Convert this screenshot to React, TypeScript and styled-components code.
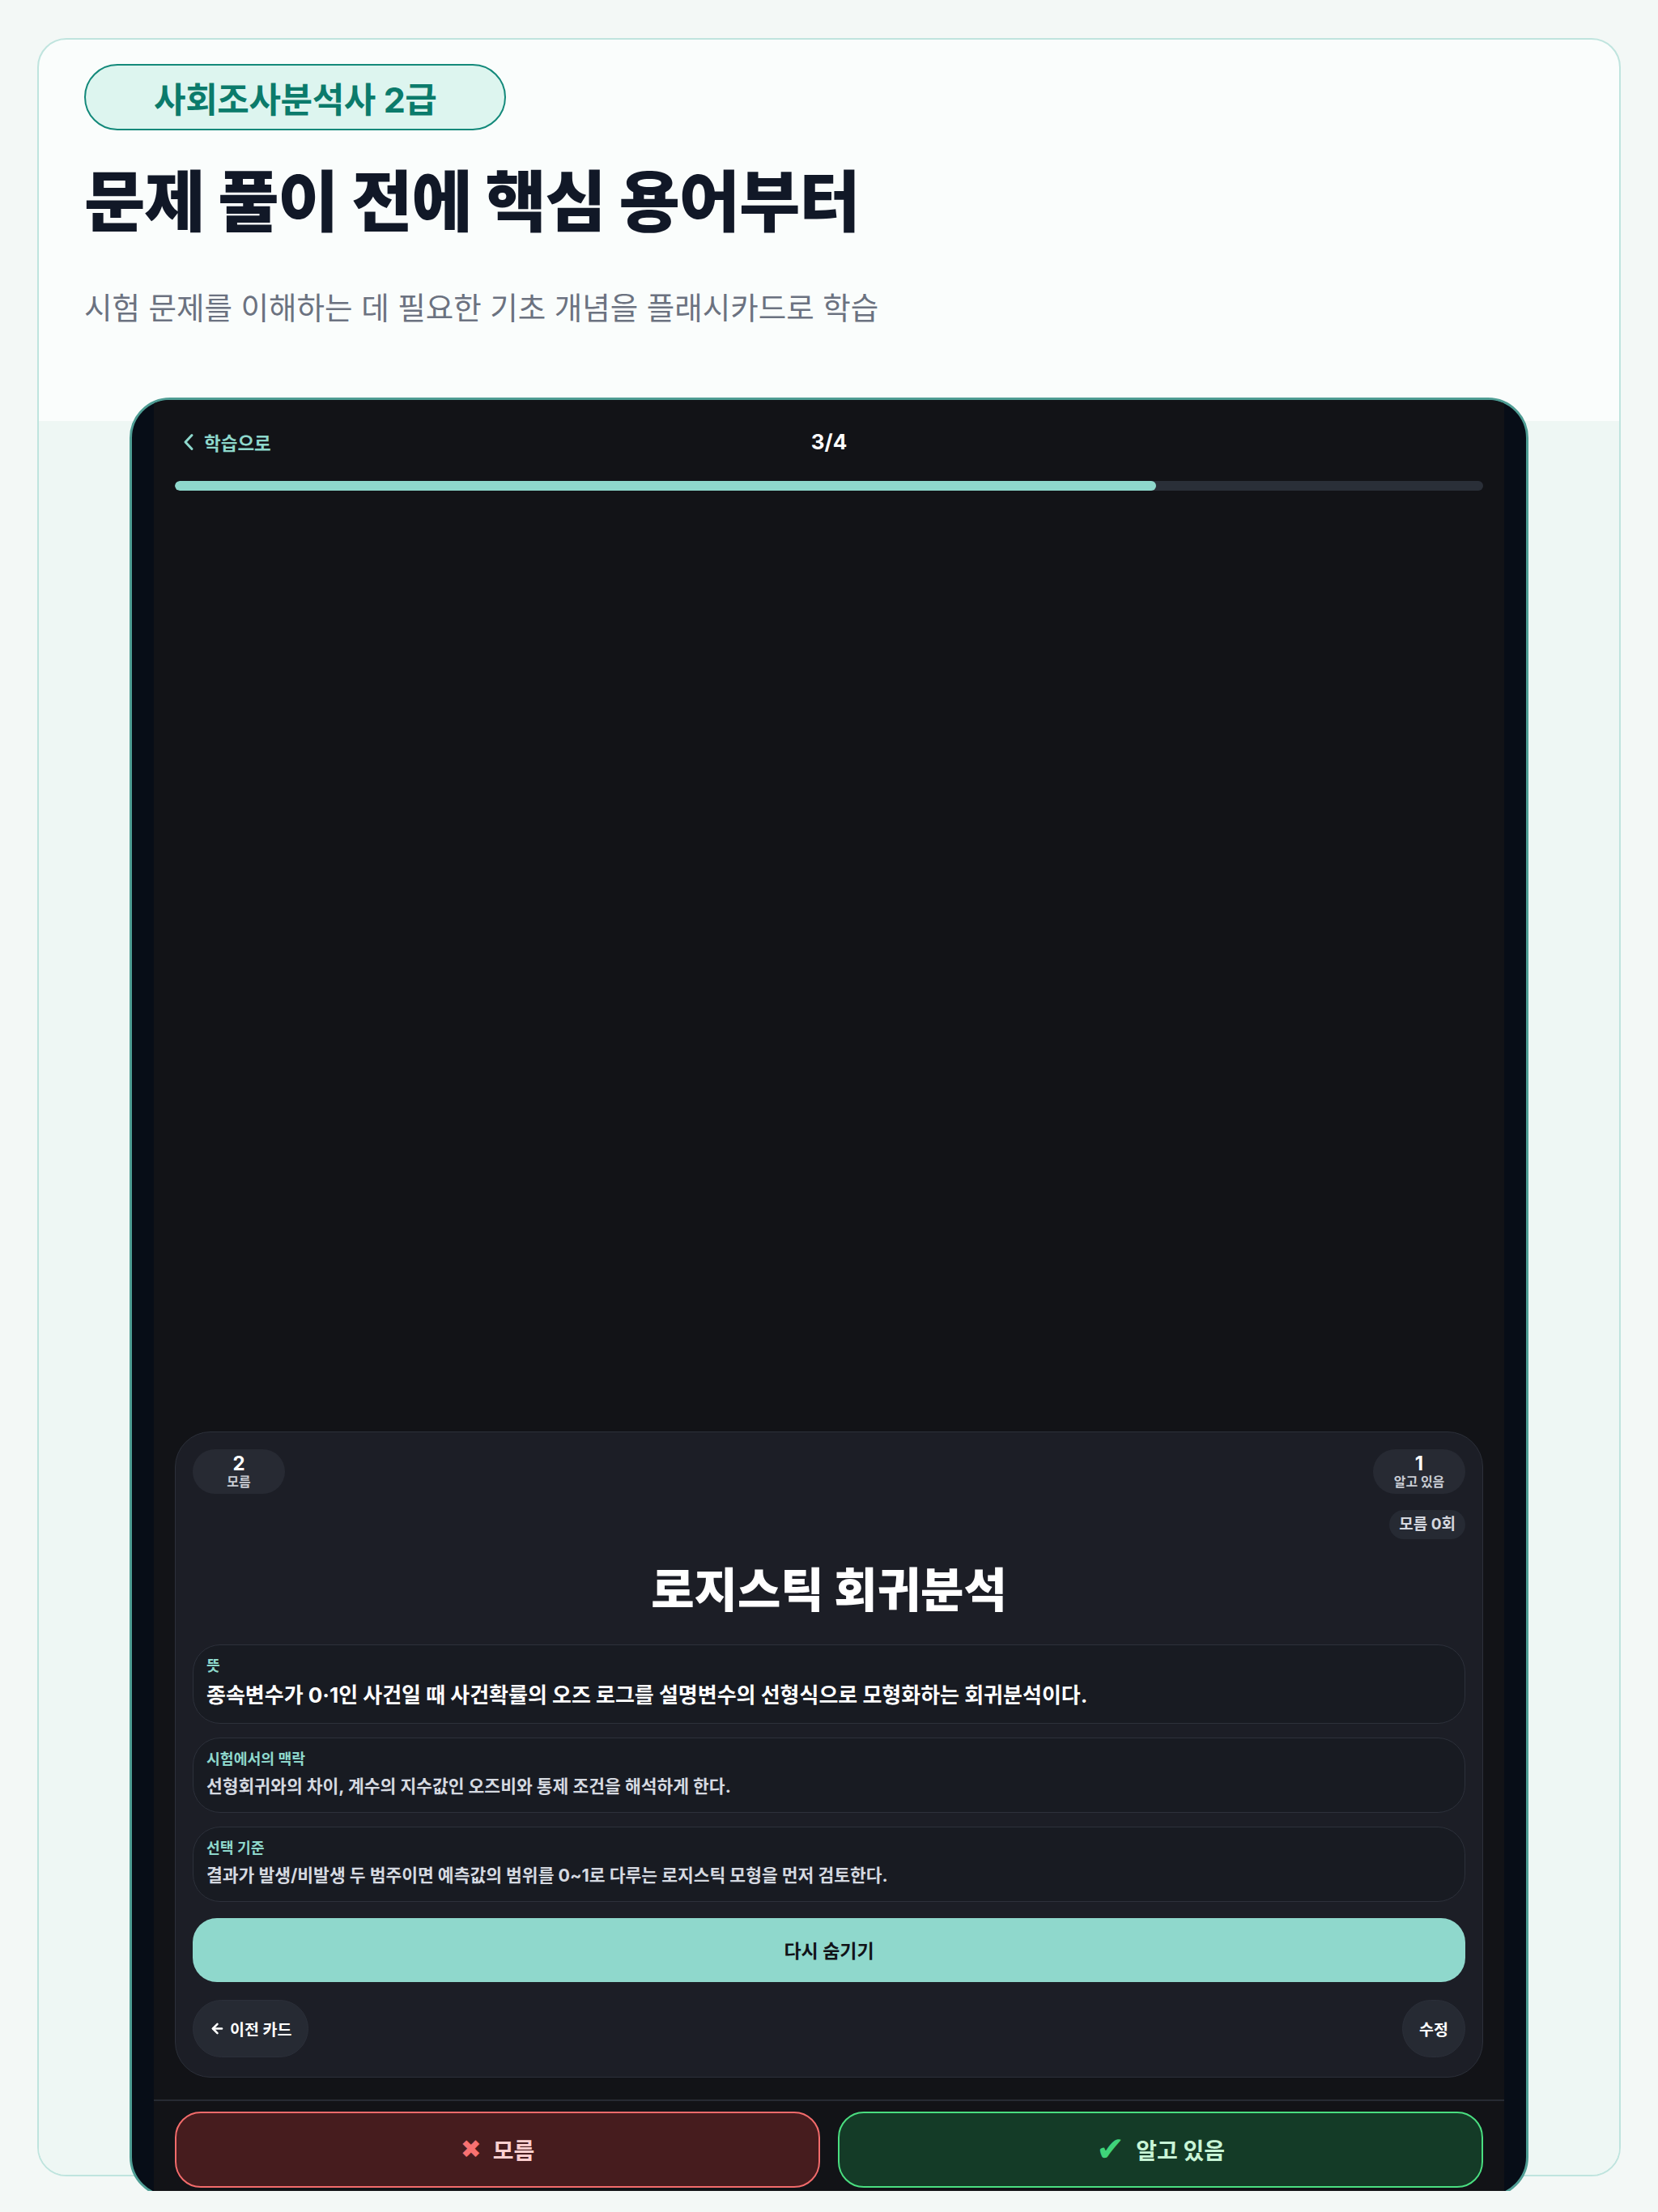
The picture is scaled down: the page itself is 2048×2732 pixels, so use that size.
import styled, { createGlobalStyle } from 'styled-components'
import { ArrowLeft } from 'lucide-react'

const GlobalStyle = createGlobalStyle`
  * {
    box-sizing: border-box;
  }
  body {
    margin: 0;
    background: #f3f8f6;
    font-family: Inter, "Noto Sans CJK KR", sans-serif;
  }
`

const Page = styled.div`
  padding: 47px 46px 18px;
`

const Shell = styled.section`
  border: 2px solid #bfe4de;
  border-radius: 36px;
  background: #fafdfc;
`

const Hero = styled.header`
  padding: 30px 56px 112px;
`

const Badge = styled.div`
  display: inline-flex;
  align-items: center;
  justify-content: center;
  height: 82px;
  padding: 0 84px;
  border: 2px solid #13897a;
  border-radius: 999px;
  background: #ddf5ef;
  color: #0b7b6b;
  font-size: 43px;
  font-weight: 700;
  letter-spacing: -0.01em;
`

const Title = styled.h1`
  margin: 40px 0 0;
  font-size: 82px;
  line-height: 1.2;
  font-weight: 800;
  color: #111827;
  letter-spacing: -0.015em;
`

const Lead = styled.p`
  margin: 56px 0 0;
  font-size: 37.5px;
  line-height: 1.4;
  font-weight: 400;
  color: #6b7280;
`

const Preview = styled.div`
  display: flex;
  justify-content: center;
  background: #eef7f4;
  border-radius: 0 0 34px 34px;
`

const Device = styled.div`
  display: flex;
  width: 1728px;
  height: 2223px;
  margin: -29px 0 -28px;
  padding: 0 27px;
  border: 3px solid #4f9d94;
  border-radius: 50px;
  background: #070d17;
  overflow: hidden;
`

const Screen = styled.div`
  flex: 1;
  display: flex;
  flex-direction: column;
  background: #121317;
`

const TopBar = styled.div`
  display: grid;
  grid-template-columns: 1fr auto 1fr;
  align-items: center;
  height: 32px;
  margin: 36px 26px 0;
`

const BackLink = styled.div`
  display: flex;
  align-items: center;
  gap: 12px;
  color: #8ed8cc;
  font-size: 22.5px;
  font-weight: 700;
  padding-left: 10px;
`

const Counter = styled.div`
  color: #ffffff;
  font-size: 26px;
  font-weight: 700;
`

const Track = styled.div`
  height: 12px;
  margin: 32px 26px 0;
  border-radius: 6px;
  background: #2a2f38;
  overflow: hidden;
`

const Fill = styled.div`
  height: 100%;
  border-radius: 6px;
  background: #8ed8cc;
`

const Spacer = styled.div`
  flex: 1;
`

const Card = styled.div`
  margin: 0 26px;
  padding: 21px 21px 24px;
  border: 1.5px solid #2c303a;
  border-radius: 44px;
  background: #1c1e26;
`

const StatRow = styled.div`
  display: flex;
  justify-content: space-between;
`

const Stat = styled.div`
  width: 114px;
  height: 55px;
  padding-top: 6px;
  border-radius: 28px;
  background: #272a33;
  text-align: center;
`

const StatValue = styled.div`
  color: #ffffff;
  font-size: 24px;
  font-weight: 700;
  line-height: 24px;
`

const StatLabel = styled.div`
  color: #c9ccd3;
  font-size: 16px;
  font-weight: 700;
  line-height: 20px;
`

const MissRow = styled.div`
  display: flex;
  justify-content: flex-end;
  margin-top: 20px;
`

const MissPill = styled.div`
  height: 36px;
  padding: 0 12px;
  border-radius: 18px;
  background: #262a33;
  color: #d4d7de;
  font-size: 19px;
  font-weight: 700;
  line-height: 36px;
`

const Term = styled.h2`
  margin: 28px 0 0;
  color: #ffffff;
  font-size: 58px;
  font-weight: 800;
  line-height: 70px;
  text-align: center;
`

const Sections = styled.div`
  display: flex;
  flex-direction: column;
  gap: 17px;
  margin-top: 32px;
`

const Section = styled.div`
  padding: 14px 16px 17px;
  border: 1.5px solid #2d313b;
  border-radius: 34px;
  background: #181b22;
`

const SectionLabel = styled.div`
  color: #8ed8cc;
  font-size: 18.3px;
  font-weight: 700;
  line-height: 22px;
  margin-bottom: 8px;
`

const SectionText = styled.div<{ $lead?: boolean }>`
  color: ${(p) => (p.$lead ? '#ffffff' : '#d5d9e0')};
  font-size: ${(p) => (p.$lead ? '26px' : '21.5px')};
  font-weight: 700;
  line-height: ${(p) => (p.$lead ? '35px' : '30px')};
`

const HideButton = styled.button`
  display: block;
  width: 100%;
  height: 79px;
  margin-top: 20px;
  border: none;
  border-radius: 30px;
  background: #8fd8cc;
  color: #111318;
  font-family: inherit;
  font-size: 23px;
  font-weight: 700;
`

const NavRow = styled.div`
  display: flex;
  justify-content: space-between;
  margin-top: 22px;
`

const NavButton = styled.button`
  display: inline-flex;
  align-items: center;
  gap: 6px;
  height: 71px;
  padding: 0 20px;
  border: 1.5px solid #2b2f39;
  border-radius: 36px;
  background: #262a33;
  color: #ffffff;
  font-family: inherit;
  font-size: 19.5px;
  font-weight: 700;
`

const Divider = styled.div`
  height: 2px;
  margin-top: 27px;
  background: #272b33;
`

const Actions = styled.div`
  display: grid;
  grid-template-columns: 1fr 1fr;
  gap: 22px;
  padding: 13px 26px 9px;
`

const ActionButton = styled.button<{ $tone: 'miss' | 'know' }>`
  display: flex;
  align-items: center;
  justify-content: center;
  gap: 14px;
  height: 94px;
  border: 2px solid ${(p) => (p.$tone === 'miss' ? '#f26b6b' : '#4ade80')};
  border-radius: 32px;
  background: ${(p) => (p.$tone === 'miss' ? '#461c1e' : '#143b27')};
  color: ${(p) => (p.$tone === 'miss' ? '#fdd0d0' : '#c8f4d6')};
  font-family: inherit;
  font-size: 28px;
  font-weight: 700;
`

const Mark = styled.span<{ $tone: 'miss' | 'know' }>`
  font-family: "DejaVu Sans", sans-serif;
  font-size: ${(p) => (p.$tone === 'miss' ? '31px' : '42px')};
  line-height: 1;
  color: ${(p) => (p.$tone === 'miss' ? '#f87171' : '#3fd47a')};
`

const sections = [
  {
    label: '뜻',
    text: '종속변수가 0·1인 사건일 때 사건확률의 오즈 로그를 설명변수의 선형식으로 모형화하는 회귀분석이다.',
    lead: true,
  },
  {
    label: '시험에서의 맥락',
    text: '선형회귀와의 차이, 계수의 지수값인 오즈비와 통제 조건을 해석하게 한다.',
  },
  {
    label: '선택 기준',
    text: '결과가 발생/비발생 두 범주이면 예측값의 범위를 0~1로 다루는 로지스틱 모형을 먼저 검토한다.',
  },
]

export default function App() {
  const current = 3
  const total = 4
  return (
    <Page>
      <GlobalStyle />
      <Shell>
        <Hero>
          <Badge>사회조사분석사 2급</Badge>
          <Title>문제 풀이 전에 핵심 용어부터</Title>
          <Lead>시험 문제를 이해하는 데 필요한 기초 개념을 플래시카드로 학습</Lead>
        </Hero>
        <Preview>
          <Device>
            <Screen>
              <TopBar>
                <BackLink>
                  <svg width="14" height="22" viewBox="0 0 14 22" fill="none">
                    <path d="M11 2.5 3 11l8 8.5" stroke="#8ed8cc" strokeWidth="3" strokeLinecap="round" strokeLinejoin="round" />
                  </svg>
                  학습으로
                </BackLink>
                <Counter>
                  {current}/{total}
                </Counter>
                <div />
              </TopBar>
              <Track>
                <Fill style={{ width: `${(current / total) * 100}%` }} />
              </Track>
              <Spacer />
              <Card>
                <StatRow>
                  <Stat>
                    <StatValue>2</StatValue>
                    <StatLabel>모름</StatLabel>
                  </Stat>
                  <Stat>
                    <StatValue>1</StatValue>
                    <StatLabel>알고 있음</StatLabel>
                  </Stat>
                </StatRow>
                <MissRow>
                  <MissPill>모름 0회</MissPill>
                </MissRow>
                <Term>로지스틱 회귀분석</Term>
                <Sections>
                  {sections.map((s) => (
                    <Section key={s.label}>
                      <SectionLabel>{s.label}</SectionLabel>
                      <SectionText $lead={s.lead}>{s.text}</SectionText>
                    </Section>
                  ))}
                </Sections>
                <HideButton>다시 숨기기</HideButton>
                <NavRow>
                  <NavButton>
                    <ArrowLeft size={19} strokeWidth={3.2} />
                    이전 카드
                  </NavButton>
                  <NavButton>수정</NavButton>
                </NavRow>
              </Card>
              <Divider />
              <Actions>
                <ActionButton $tone="miss">
                  <Mark $tone="miss">✖</Mark>
                  모름
                </ActionButton>
                <ActionButton $tone="know">
                  <Mark $tone="know">✔</Mark>
                  알고 있음
                </ActionButton>
              </Actions>
            </Screen>
          </Device>
        </Preview>
      </Shell>
    </Page>
  )
}
